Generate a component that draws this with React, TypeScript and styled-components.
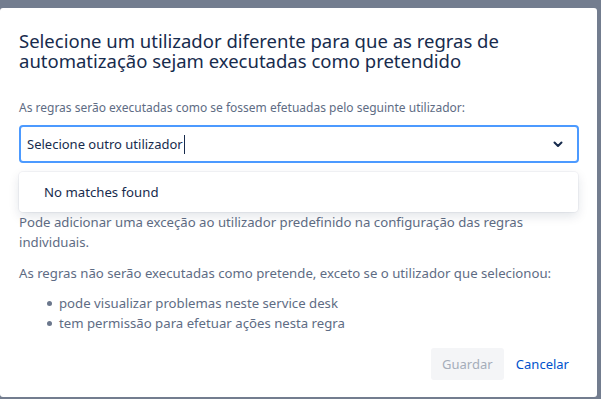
import React from 'react'
import styled, { createGlobalStyle } from 'styled-components'

const GlobalStyle = createGlobalStyle`
  html, body {
    margin: 0;
    padding: 0;
    background: #737d8f;
    font-family: 'Noto Sans', 'Open Sans', sans-serif;
    overflow: hidden;
  }
`

const Backdrop = styled('div')`
  width: 601px;
  height: 399px;
  padding: 8px 4px 0 0;
  box-sizing: border-box;
`

const Modal = styled('section')`
  width: 597px;
  height: 389px;
  background: #fff;
  border-radius: 3px;
  box-sizing: border-box;
  padding: 23px 18px 17px 19px;
  display: flex;
  flex-direction: column;
  color: #172b4d;
`

const Title = styled('h1')`
  margin: 0;
  font-size: 18.5px;
  line-height: 20px;
  font-weight: 400;
  color: #172b4d;
`

const Label = styled('label')`
  margin: 29px 0 9px;
  font-size: 12px;
  line-height: 16px;
  color: #5e6c84;
`

const Field = styled('div')`
  position: relative;
`

const Input = styled('div')`
  height: 38px;
  box-sizing: border-box;
  border: 2px solid #4c9aff;
  border-radius: 4px;
  display: flex;
  align-items: center;
  padding: 0 14px 0 6px;
  font-size: 13px;
  color: #172b4d;
`

const InputText = styled('span')`
  flex: 1;
  display: flex;
  align-items: center;
`

const Caret = styled('span')`
  display: inline-block;
  width: 1px;
  height: 19px;
  margin-left: 1px;
  background: #172b4d;
`

const Menu = styled('div')`
  position: absolute;
  top: 47px;
  left: 0;
  right: 1px;
  height: 40px;
  background: #fff;
  border-radius: 4px;
  box-shadow: 0 0 0 1px rgba(9, 30, 66, 0.04), 0 4px 11px rgba(9, 30, 66, 0.12);
  display: flex;
  align-items: center;
  padding-left: 25px;
  font-size: 13.2px;
  color: #172b4d;
`

const Paragraph = styled('p')<{ $top: number }>`
  margin: ${(p) => p.$top}px 0 0;
  font-size: 13.2px;
  line-height: 20px;
  color: #5e6c84;
`

const List = styled('ul')`
  margin: 10px 0 0;
  padding: 0 0 0 40px;
  list-style: none;
  font-size: 13.2px;
  line-height: 20px;
  color: #5e6c84;
`

const Item = styled('li')`
  position: relative;
  &::before {
    content: '';
    position: absolute;
    left: -12px;
    top: 8px;
    width: 5px;
    height: 5px;
    border-radius: 50%;
    background: #6b778c;
  }
`

const Footer = styled('footer')`
  margin-top: auto;
  display: flex;
  justify-content: flex-end;
  gap: 2px;
`

const Button = styled('button')<{ $kind: 'disabled' | 'link' }>`
  height: 32px;
  border: 0;
  border-radius: 3px;
  padding: 0 10px;
  font-family: inherit;
  font-size: 13px;
  background: ${(p) => (p.$kind === 'disabled' ? '#f4f5f7' : 'transparent')};
  color: ${(p) => (p.$kind === 'disabled' ? '#a5adba' : '#0052cc')};
  width: ${(p) => (p.$kind === 'disabled' ? '73px' : 'auto')};
`

const Chevron = () => (
  <svg width="10" height="7" viewBox="0 0 10 7">
    <path d="M1.5 1.5 L5 5 L8.5 1.5" fill="none" stroke="#172b4d" strokeWidth="2" strokeLinecap="round" strokeLinejoin="round" />
  </svg>
)

export default function App() {
  return (
    <>
      <GlobalStyle />
      <Backdrop>
        <Modal>
          <Title>
            Selecione um utilizador diferente para que as regras de automatização sejam executadas como pretendido
          </Title>
          <Label>As regras serão executadas como se fossem efetuadas pelo seguinte utilizador:</Label>
          <Field>
            <Input>
              <InputText>
                Selecione outro utilizador
                <Caret />
              </InputText>
              <Chevron />
            </Input>
            <Menu>No matches found</Menu>
          </Field>
          <Paragraph $top={49}>
            Pode adicionar uma exceção ao utilizador predefinido na configuração das regras individuais.
          </Paragraph>
          <Paragraph $top={11}>
            As regras não serão executadas como pretende, exceto se o utilizador que selecionou:
          </Paragraph>
          <List>
            <Item>pode visualizar problemas neste service desk</Item>
            <Item>tem permissão para efetuar ações nesta regra</Item>
          </List>
          <Footer>
            <Button $kind="disabled" disabled>
              Guardar
            </Button>
            <Button $kind="link">Cancelar</Button>
          </Footer>
        </Modal>
      </Backdrop>
    </>
  )
}
